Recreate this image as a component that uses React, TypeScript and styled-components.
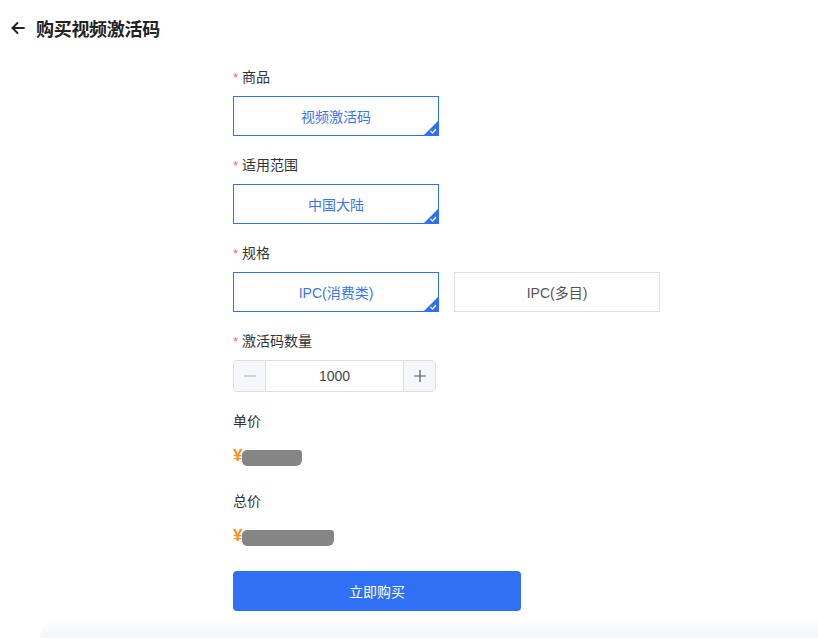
import React, { useState } from "react";
import styled, { createGlobalStyle } from "styled-components";

const GlobalStyle = createGlobalStyle`
  html, body {
    margin: 0;
    padding: 0;
    background: #fff;
    font-family: "Liberation Sans", "Noto Sans CJK SC", sans-serif;
    color: #333;
  }
  * { box-sizing: border-box; }
`;

const Page = styled.div`
  width: 818px;
  height: 638px;
  position: relative;
  overflow: hidden;
  display: flex;
  flex-direction: column;
`;

const Header = styled.div`
  height: 56px;
  display: flex;
  align-items: center;
  gap: 10px;
  padding: 0 0 0 10px;
`;

const BackButton = styled.button`
  border: 0;
  background: none;
  padding: 0;
  width: 16px;
  height: 16px;
  display: flex;
  align-items: center;
  justify-content: center;
  cursor: pointer;
  color: #222;
`;

const Title = styled.h1`
  margin: 0;
  font-size: 18px;
  font-weight: 700;
  color: #222;
  letter-spacing: -0.3px;
`;

const Form = styled.div`
  margin-left: 233px;
  padding-top: 11px;
  display: flex;
  flex-direction: column;
`;

const Field = styled.div`
  display: flex;
  flex-direction: column;
  margin-bottom: 19px;
`;

const Label = styled.div`
  height: 20px;
  line-height: 20px;
  font-size: 14px;
  color: #333;
  margin-bottom: 9px;
`;

const Star = styled.span`
  color: #f0706a;
  margin-right: 4px;
  font-size: 13px;
`;

const Options = styled.div`
  display: flex;
  gap: 15px;
`;

const Option = styled.div<{ $active?: boolean }>`
  position: relative;
  width: 206px;
  height: 40px;
  display: flex;
  align-items: center;
  justify-content: center;
  font-size: 14px;
  border: 1px solid ${(p) => (p.$active ? "#2f6ff5" : "#dcdfe6")};
  color: ${(p) => (p.$active ? "#3a74f3" : "#555")};
  cursor: pointer;
  overflow: hidden;
`;

const Corner = styled.svg`
  position: absolute;
  right: 0;
  bottom: 0;
`;

const Stepper = styled.div`
  display: flex;
  width: 203px;
  height: 32px;
  border: 1px solid #dcdfe6;
  border-radius: 4px;
  overflow: hidden;
`;

const StepButton = styled.button`
  width: 32px;
  border: 0;
  background: #f5f7fa;
  color: #555;
  display: flex;
  align-items: center;
  justify-content: center;
  padding: 0;
  cursor: pointer;
  &:first-child { border-right: 1px solid #dcdfe6; }
  &:last-child { border-left: 1px solid #dcdfe6; }
`;

const StepValue = styled.div`
  flex: 1;
  display: flex;
  align-items: center;
  justify-content: center;
  font-size: 14px;
  color: #444;
`;

const PriceBlock = styled.div`
  display: flex;
  flex-direction: column;
`;

const PriceLabel = styled.div`
  font-size: 14px;
  line-height: 20px;
  color: #333;
  height: 20px;
`;

const PriceRow = styled.div`
  height: 20px;
  margin: 15px 0 25px;
  display: flex;
  align-items: center;
`;

const Yen = styled.span`
  color: #f5911e;
  font-size: 17px;
  font-weight: 700;
`;

const Redacted = styled.span<{ $w: number }>`
  display: inline-block;
  width: ${(p) => p.$w}px;
  height: 16px;
  margin-top: 3px;
  background: #858585;
  border-radius: 5px 3px 6px 5px;
`;

const Submit = styled.button`
  width: 288px;
  height: 40px;
  border: 0;
  border-radius: 4px;
  background: #3070f5;
  color: #fff;
  font-size: 14px;
  font-family: inherit;
  cursor: pointer;
  position: relative;
  z-index: 1;
`;

const Footer = styled.div`
  position: absolute;
  left: 40px;
  right: 0;
  bottom: 0;
  height: 20px;
  background: linear-gradient(#fff, #f3f5f8);
  border-top-left-radius: 20px;
`;

const Check = () => (
  <Corner width="14" height="14" viewBox="0 0 14 14">
    <polygon points="14,0 14,14 0,14" fill="#2f6ff5" />
    <polyline points="6.5,10 8.5,12 12,8" fill="none" stroke="#fff" strokeWidth="1.2" />
  </Corner>
);

type OptProps = { label: string; active?: boolean; onClick?: () => void };
const OptionItem = ({ label, active, onClick }: OptProps) => (
  <Option $active={active} onClick={onClick}>
    {label}
    {active && <Check />}
  </Option>
);

export default function App() {
  const [spec, setSpec] = useState(0);
  const [count, setCount] = useState(1000);

  return (
    <Page>
      <GlobalStyle />
      <Header>
        <BackButton aria-label="back">
          <svg width="14" height="14" viewBox="0 0 14 14" fill="none" stroke="#222" strokeWidth="1.8" strokeLinecap="round" strokeLinejoin="round">
            <line x1="1.5" y1="7" x2="13" y2="7" />
            <polyline points="6.5,2 1.5,7 6.5,12" />
          </svg>
        </BackButton>
        <Title>购买视频激活码</Title>
      </Header>
      <Form>
        <Field>
          <Label><Star>*</Star>商品</Label>
          <Options>
            <OptionItem label="视频激活码" active />
          </Options>
        </Field>
        <Field>
          <Label><Star>*</Star>适用范围</Label>
          <Options>
            <OptionItem label="中国大陆" active />
          </Options>
        </Field>
        <Field>
          <Label><Star>*</Star>规格</Label>
          <Options>
            <OptionItem label="IPC(消费类)" active={spec === 0} onClick={() => setSpec(0)} />
            <OptionItem label="IPC(多目)" active={spec === 1} onClick={() => setSpec(1)} />
          </Options>
        </Field>
        <Field>
          <Label><Star>*</Star>激活码数量</Label>
          <Stepper>
            <StepButton onClick={() => setCount((c) => Math.max(1, c - 1))} aria-label="minus">
              <svg width="14" height="14" viewBox="0 0 14 14" stroke="#aaa" strokeWidth="1.2">
                <line x1="1" y1="7" x2="13" y2="7" />
              </svg>
            </StepButton>
            <StepValue>{count}</StepValue>
            <StepButton onClick={() => setCount((c) => c + 1)} aria-label="plus">
              <svg width="14" height="14" viewBox="0 0 14 14" stroke="#555" strokeWidth="1.2">
                <line x1="1" y1="7" x2="13" y2="7" />
                <line x1="7" y1="1" x2="7" y2="13" />
              </svg>
            </StepButton>
          </Stepper>
        </Field>
        <PriceBlock>
          <PriceLabel>单价</PriceLabel>
          <PriceRow>
            <Yen>¥</Yen>
            <Redacted $w={60} />
          </PriceRow>
          <PriceLabel>总价</PriceLabel>
          <PriceRow>
            <Yen>¥</Yen>
            <Redacted $w={92} />
          </PriceRow>
        </PriceBlock>
        <Submit>立即购买</Submit>
      </Form>
      <Footer />
    </Page>
  );
}
